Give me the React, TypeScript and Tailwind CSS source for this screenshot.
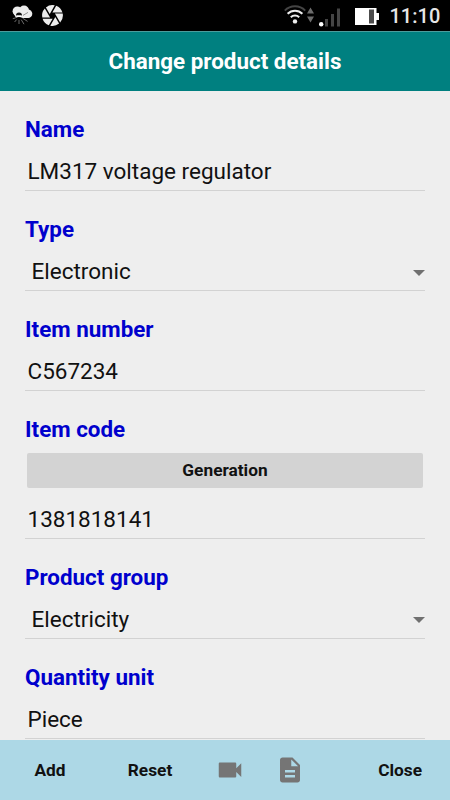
import type { ReactNode } from 'react';
import { MdCamera, MdDescription, MdVideocam } from 'react-icons/md';

interface FieldProps {
  label: string;
  value: string;
  select?: boolean;
  children?: ReactNode;
}

function WeatherIcon(): React.JSX.Element {
  return (
    <svg width="21" height="21" viewBox="0 0 21 21" fill="none">
      <g fill="#ececec">
        <circle cx="5.4" cy="6.2" r="4.8" />
        <circle cx="12" cy="5.6" r="5" />
        <circle cx="16" cy="8.8" r="4.3" />
        <path d="M1.500 8h15v5H4z" />
      </g>
      <path d="M4 10.600a3 3 0 0 1 6 0z" fill="#111" />
      <path d="M4.600 10.600h4.800a2.400 2 0 0 1-4.800 0z" fill="#fff" />
      <path d="M3.500 13q3.500-1.800 7 0v1h-7z" fill="#000" />
      <path d="m11 10.400 5-3" stroke="#777" strokeWidth="0.8" />
      <path d="M3.600 13 .8 13.600M4.600 14.600 2.600 17M7 15v4M9.200 14.600l2.800 4.600M10.600 13.200l5 3.200" stroke="#888" strokeWidth="0.8" />
    </svg>
  );
}

function WifiIcon(): React.JSX.Element {
  return (
    <svg width="30" height="21" viewBox="0 0 30 21" fill="none">
      <path d="M.8 6.6a14.2 14.2 0 0 1 20.4 0" stroke="#444" strokeWidth="2" />
      <path d="M3.6 9.8a10.4 10.4 0 0 1 14.8 0M6.8 13.2a6 6 0 0 1 8.4 0" stroke="#eee" strokeWidth="2" />
      <circle cx="11" cy="17.4" r="2.2" fill="#eee" />
      <path d="m23 9.6 3.5-6 3.5 6zM23 12.6h7l-3.5 6z" fill="#6c6c6c" />
    </svg>
  );
}

function SignalIcon(): React.JSX.Element {
  return (
    <svg width="22" height="19" viewBox="0 0 22 19">
      <circle cx="2.2" cy="16.3" r="2.2" fill="#fff" />
      <path d="M6 11h3v7.5H6zM12 6h3v12.5h-3zM18 .5h3v18h-3z" fill="#444" />
    </svg>
  );
}

function BatteryIcon(): React.JSX.Element {
  return (
    <svg width="24" height="17" viewBox="0 0 24 17">
      <path d="M0 0h21.5v5H24v7h-2.5v5H0z" fill="#fff" />
      <path d="M14 1.5h5v14h-5z" fill="#4c4c4c" />
    </svg>
  );
}

function StatusBar(): React.JSX.Element {
  return (
    <div className="flex h-[31px] shrink-0 items-start bg-black pl-3">
      <div className="mt-[5px]">
        <WeatherIcon />
      </div>
      <MdCamera className="mt-[3px] ml-[7px] size-[25px] text-[#ececec]" />
      <div className="mt-1 ml-[219px]">
        <WifiIcon />
      </div>
      <div className="mt-2 ml-[5px]">
        <SignalIcon />
      </div>
      <div className="mt-2 ml-[14px]">
        <BatteryIcon />
      </div>
      <span className="mt-1 ml-[10.5px] text-[20px] leading-6 font-medium text-[#e6e6e6]">11:10</span>
    </div>
  );
}

function Field({ label, value, select = false, children }: FieldProps): React.JSX.Element {
  return (
    <div className="pt-6">
      <label className="block text-[22.4px] leading-7 font-bold text-[#0000cd]">{label}</label>
      {children}
      <div
        className={`mt-[9px] flex h-[39px] items-center justify-between border-b border-[#d2d2d2] pt-[2px] text-[22.5px] text-[#111] ${select ? 'pl-[6.5px]' : 'pl-[2.5px]'}`}
      >
        <span>{value}</span>
        {select ? (
          <svg width="12" height="6" viewBox="0 0 12 6" className="mt-px">
            <path d="M0 0h12L6 6z" fill="#707070" />
          </svg>
        ) : null}
      </div>
    </div>
  );
}

export default function App(): React.JSX.Element {
  return (
    <div className="flex h-[800px] w-[450px] flex-col overflow-hidden bg-[#eee] font-[Roboto,sans-serif]">
      <StatusBar />
      <header className="flex h-[60px] shrink-0 items-center justify-center border-t border-[#4c9c9c] bg-[#008080] pb-[2px]">
        <h1 className="text-[22.4px] leading-7 font-bold text-white">Change product details</h1>
      </header>
      <main className="min-h-0 flex-1 overflow-hidden px-[25px]">
        <Field label="Name" value="LM317 voltage regulator" />
        <Field label="Type" value="Electronic" select />
        <Field label="Item number" value="C567234" />
        <Field label="Item code" value="1381818141">
          <button className="mx-[2px] mt-2.5 mb-[11.5px] block h-[35px] w-[396px] rounded-[2px] bg-[#d3d3d3] text-[17.3px] font-bold text-[#111]">
            Generation
          </button>
        </Field>
        <Field label="Product group" value="Electricity" select />
        <Field label="Quantity unit" value="Piece" />
      </main>
      <footer className="grid h-[60px] shrink-0 grid-cols-[100px_100px_60px_60px_130px] items-center bg-[#add8e6] text-[17.3px] font-bold text-[#111]">
        <button className="pt-[2px]">Add</button>
        <button className="pt-[2px]">Reset</button>
        <MdVideocam className="size-[30px] justify-self-center text-[#757575]" />
        <MdDescription className="size-[30px] justify-self-center text-[#757575]" />
        <button className="justify-self-end pt-[2px] pr-7">Close</button>
      </footer>
    </div>
  );
}
